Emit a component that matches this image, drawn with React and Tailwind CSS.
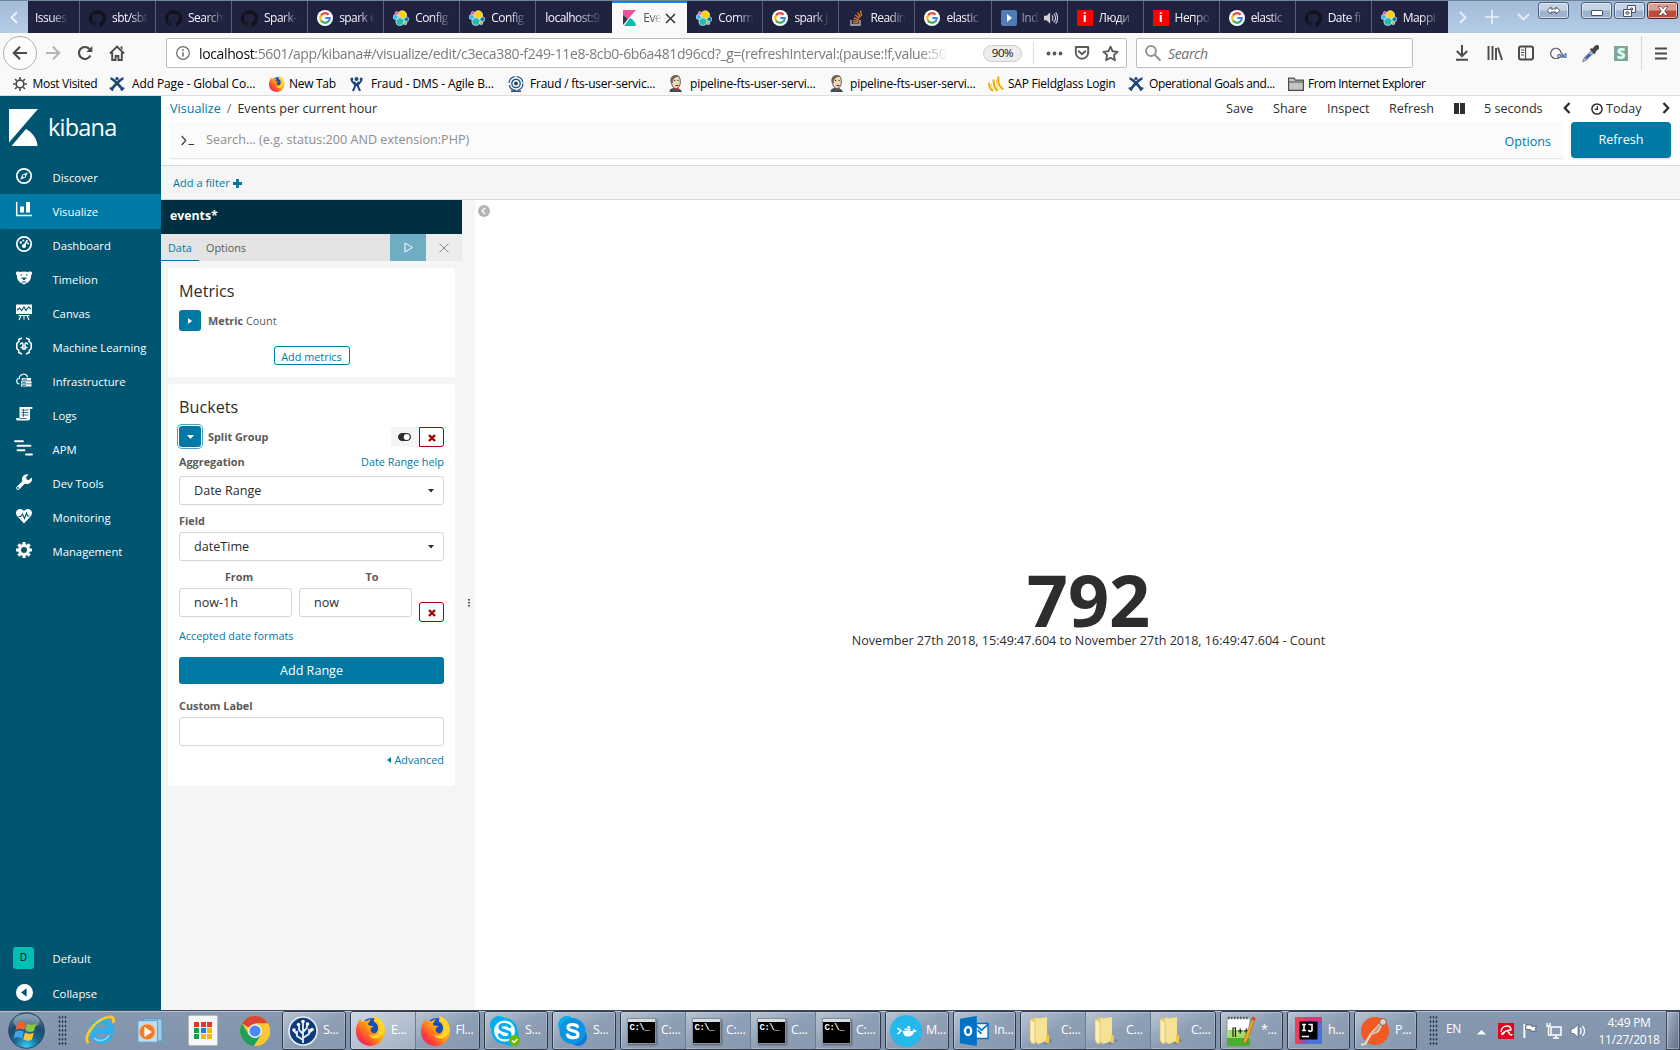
import React from "react";

const UI = "font-['Open_Sans','Noto_Sans',sans-serif]";

function Svg({ s = 16, w, h, vb = "0 0 16 16", className = "", children, ...p }) {
  return (
    <svg width={w || s} height={h || s} viewBox={vb} className={"shrink-0 " + className} fill="none" {...p}>
      {children}
    </svg>
  );
}

/* ---------- favicons ---------- */
const Github = () => (
  <Svg s={17}>
    <path fill="#121219" d="M8 0C3.6 0 0 3.6 0 8c0 3.5 2.3 6.500 5.500 7.600.4.1.5-.2.5-.4v-1.400c-2.200.5-2.700-1-2.700-1-.4-.9-.9-1.200-.9-1.200-.7-.5.1-.5.1-.5.8.1 1.200.8 1.200.8.7 1.200 1.900.9 2.300.7.1-.5.3-.9.5-1.100-1.800-.2-3.600-.9-3.600-4 0-.9.3-1.600.8-2.100-.1-.2-.4-1 .1-2.100 0 0 .7-.2 2.200.8.6-.2 1.300-.3 2-.3s1.400.1 2 .3c1.500-1 2.200-.8 2.200-.8.4 1.100.2 1.900.1 2.100.5.6.8 1.300.8 2.100 0 3.100-1.900 3.700-3.700 3.900.3.4.6.9.6 1.600v2.200c0 .2.1.5.6.4C13.700 14.500 16 11.500 16 8c0-4.400-3.600-8-8-8z" />
  </Svg>
);
const Google = () => (
  <Svg s={16}>
    <circle cx="8" cy="8" r="8" fill="#fff" />
    <g strokeWidth="2.200">
      <path stroke="#ea4335" d="M4 5.500A4.800 4.800 0 0 1 11.500 4.600" />
      <path stroke="#fbbc05" d="M4 5.500A4.800 4.800 0 0 0 4 10.500" />
      <path stroke="#34a853" d="M4 10.500A4.800 4.800 0 0 0 11.200 11.600" />
      <path stroke="#4285f4" d="M11.200 11.600A4.800 4.800 0 0 0 12.800 8H8.200" />
    </g>
  </Svg>
);
const Elastic = () => (
  <Svg s={16}>
    <circle cx="9.300" cy="5" r="4.300" fill="#fed10a" stroke="#fff" strokeWidth=".6" />
    <circle cx="6.800" cy="11.600" r="4" fill="#24bbb1" stroke="#fff" strokeWidth=".6" />
    <circle cx="2.700" cy="7" r="2.500" fill="#36b9ee" stroke="#fff" strokeWidth=".6" />
    <circle cx="13.400" cy="9.300" r="2.400" fill="#0b7bb8" stroke="#fff" strokeWidth=".6" />
    <circle cx="3.900" cy="3.200" r="1.700" fill="#ef5098" stroke="#fff" strokeWidth=".5" />
    <circle cx="12.200" cy="13" r="1.700" fill="#93c83e" stroke="#fff" strokeWidth=".5" />
  </Svg>
);
const KibanaFav = () => (
  <Svg w={13} h={16} vb="0 0 13 16">
    <path d="M0 0h13L5 9 0 5z" fill="#f04e98" />
    <path d="M0 5l5 4-5 6z" fill="#343741" />
    <path d="M7 8c4 2 6 5 6 8H1z" fill="#00bfb3" />
  </Svg>
);
const Stack = () => (
  <Svg s={16}>
    <path d="M3 10v5h9v-5" stroke="#bcbbbb" strokeWidth="1.300" />
    <path d="M5 12.800h5.500M5.100 10.600l5.400.7M5.700 8l5 1.900M7.200 5l4.300 3.300M9.500 2.500l3 4.600M12.500.5l1 5.500" stroke="#f48024" strokeWidth="1.300" />
  </Svg>
);
const PlayFav = () => (
  <Svg s={16}>
    <rect width="16" height="16" rx="2" fill="#4f7db3" />
    <path d="M6 4l5 4-5 4z" fill="#fff" />
  </Svg>
);
const RedI = () => (
  <span className="flex h-4 w-4 shrink-0 items-center justify-center bg-[#f00] text-[12px] leading-none font-bold text-white">i</span>
);
const Speaker = ({ c = "#d0d0d8" }) => (
  <Svg s={14}>
    <path d="M0 5.500h3l4-4v13l-4-4H0z" fill={c} />
    <path d="M9 5c1.500 1.500 1.500 4.500 0 6M11 3c3 2.500 3 7.500 0 10M13.300 1.500c3 3.500 3 9.500 0 13" stroke={c} strokeWidth="1.300" />
  </Svg>
);

const tabs = [
  [null, "Issues"],
  [Github, "sbt/sbt"],
  [Github, "Search"],
  [Github, "Spark-"],
  [Google, "spark e"],
  [Elastic, "Config"],
  [Elastic, "Config"],
  [null, "localhost:9"],
  [KibanaFav, "Eve"],
  [Elastic, "Comm"],
  [Google, "spark j"],
  [Stack, "Readin"],
  [Google, "elastic"],
  [PlayFav, "Ind"],
  [RedI, "Люди"],
  [RedI, "Непро"],
  [Google, "elastic"],
  [Github, "Date fi"],
  [Elastic, "Mappi"],
];

const FADE = "[mask-image:linear-gradient(to_right,black_45%,transparent)]";

function Tab({ icon: Icon, label, i }) {
  if (i === 8)
    return (
      <div className="flex h-[32px] w-[75px] shrink-0 items-center border-t-2 border-[#0a84ff] bg-[#f9f9fa] pl-[11px]">
        <KibanaFav />
        <span className={"ml-[7px] w-[19px] overflow-hidden whitespace-nowrap text-[#555] " + FADE}>{label}</span>
        <Svg s={11} vb="0 0 11 11" className="ml-[3px]">
          <path d="M1 1l9 9M10 1l-9 9" stroke="#333" strokeWidth="1.500" />
        </Svg>
      </div>
    );
  return (
    <div className={"flex h-[32px] shrink-0 items-center pt-[2px] " + (i === 0 ? "w-[52px] pl-[7px]" : "w-[76.060px] pl-[9px]") + (i === 7 || i === 18 ? "" : " border-r border-[#5d5e73]")}>
      {Icon && <Icon />}
      <span className={"h-[18px] overflow-hidden leading-[18px] whitespace-nowrap " + (i === 13 ? "w-[18px] " : Icon ? "w-[37px] " : i ? "w-[60px] " : "w-[34px] ") + (Icon ? (i === 13 ? "ml-[5px] text-[#9a9ab0] " : "ml-[6px] ") : "") + "[mask-image:linear-gradient(to_right,black_50%,transparent_97%)]"}>{label}</span>
      {i === 13 && <span className="ml-[4px]"><Speaker /></span>}
    </div>
  );
}

function WinBtn({ cls, children }) {
  return (
    <div className={"flex h-[17px] items-center justify-center rounded-[3px] border border-[#4b5f7a] shadow-[inset_0_0_0_1px_rgba(255,255,255,.55)] " + cls}>{children}</div>
  );
}
const BLUEBTN = "bg-linear-to-b from-[#c3d2e4] from-45% to-[#9db3cf] to-55%";

function TabBar() {
  return (
    <div className="flex h-[33px] border-t border-[#6d8799] bg-linear-to-b from-[#a3bbd8] to-[#b5cce7] text-[12px] tracking-[-0.550px] text-[#f4f4fa]">
      <div className="flex w-[28px] shrink-0 items-center pl-[10px]">
        <Svg w={8} h={13} vb="0 0 8 13"><path d="M7 1L1.500 6.500 7 12" stroke="#eef3f9" strokeWidth="1.800" /></Svg>
      </div>
      <div className="flex w-[1420px] shrink-0 overflow-hidden bg-[#202340]">
        {tabs.map(([icon, label], i) => <Tab key={i} icon={icon} label={label} i={i} />)}
      </div>
      <div className="flex flex-1 items-start">
        <div className="flex h-[32px] w-[90px] items-center">
          <Svg w={8} h={13} vb="0 0 8 13" className="ml-[11px]"><path d="M1 1l5.500 5.500L1 12" stroke="#e8eff8" strokeWidth="1.800" /></Svg>
          <Svg s={14} vb="0 0 14 14" className="ml-[18px]"><path d="M7 0v14M0 7h14" stroke="#e8eff8" strokeWidth="1.700" /></Svg>
          <Svg w={13} h={8} vb="0 0 13 8" className="ml-[18px]"><path d="M1 1l5.500 5.500L12 1" stroke="#e8eff8" strokeWidth="1.800" /></Svg>
        </div>
        <WinBtn cls={"mt-[1px] w-[31px] " + BLUEBTN}>
          <Svg w={15} h={9} vb="0 0 15 9"><path d="M1 4.500L5 1v2h5V1l4 3.500L10 8V6H5v2z" fill="#fff" stroke="#505868" /></Svg>
        </WinBtn>
        <WinBtn cls={"mt-[1px] ml-[12px] w-[31px] " + BLUEBTN}>
          <span className="mt-[4px] h-[6px] w-[12px] rounded-[1px] border border-[#4a5262] bg-white" />
        </WinBtn>
        <WinBtn cls={"mt-[1px] ml-[2px] w-[31px] " + BLUEBTN}>
          <Svg w={13} h={12} vb="0 0 13 12"><path d="M4.500.5h8v7h-8zM7.500 3h2v2h-2z" fill="#fff" stroke="#4a5262" /><path d="M.5 4.500h8v7h-8zM3 7h3v2H3z" fill="#fff" stroke="#4a5262" /></Svg>
        </WinBtn>
        <WinBtn cls="mt-[1px] ml-[2px] w-[31px] border-[#5b1e22] bg-linear-to-b from-[#df9d92] from-45% to-[#c04a38] to-55%">
          <Svg w={12} h={10} vb="0 0 12 10"><path d="M1 .5h3l2 2.300L8 .5h3L7.700 5 11 9.500H8L6 7.200 4 9.500H1L4.300 5z" fill="#fff" stroke="#4a4a58" strokeWidth=".8" /></Svg>
        </WinBtn>
      </div>
    </div>
  );
}

function NavBar() {
  const k = "#4a4a4f";
  return (
    <div className="flex h-[39px] items-center bg-[#f9f9fa] pt-px">
      <div className="ml-[3px] flex h-[34px] w-[34px] items-center justify-center rounded-full border border-[#b1b1b5] bg-[#fcfcfc]">
        <Svg s={16}><path d="M15 8H2M8 1.800L1.800 8 8 14.200" stroke={k} strokeWidth="2.100" /></Svg>
      </div>
      <Svg s={16} className="ml-[8px]"><path d="M1 8h13M8 1.800L14.200 8 8 14.200" stroke="#b4b4b6" strokeWidth="2.100" /></Svg>
      <Svg s={16} className="ml-[16px]"><path d="M13.400 10.500A6 6 0 1 1 12.500 4" stroke={k} strokeWidth="2.100" /><path d="M15.300 1v6h-6z" fill={k} /></Svg>
      <Svg s={16} className="ml-[16px]"><path d="M1 8.500L8 1.500l7 7M3.200 7.500V15h3.400v-4h2.800v4h3.400V7.500" stroke={k} strokeWidth="1.900" /><path d="M11.500 1.500h2v3.500l-2-2z" fill={k} /></Svg>
      <div className="ml-[41px] flex h-[30px] w-[961px] items-center rounded-[2px] border border-[#bdbdbf] bg-white">
        <Svg s={14} className="ml-[9px]"><circle cx="8" cy="8" r="7.200" stroke="#6a6a6e" strokeWidth="1.400" /><path d="M8 7v5M8 3.800v1.800" stroke="#6a6a6e" strokeWidth="1.700" /></Svg>
        <div className="ml-[9px] w-[750px] overflow-hidden text-[14px] tracking-[-0.370px] whitespace-nowrap text-[#7b7b7d] [mask-image:linear-gradient(to_right,black_96%,transparent)]">
          <span className="text-[#0c0c0d]">localhost</span>:5601/app/kibana#/visualize/edit/c3eca380-f249-11e8-8cb0-6b6a481d96cd?_g=(refreshInterval:(pause:!f,value:50
        </div>
        <div className="ml-[34px] flex h-[17px] w-[39px] items-center justify-center rounded-full border border-[#ccc] bg-[#ededed] text-[11.500px] tracking-[-0.400px] text-[#111]">90%</div>
        <div className="ml-[11px] h-[22px] w-px bg-[#ddd]" />
        <Svg w={17} h={5} vb="0 0 17 5" className="ml-[12px]"><circle cx="2.500" cy="2.500" r="1.900" fill="#5a5a5e" /><circle cx="8.500" cy="2.500" r="1.900" fill="#5a5a5e" /><circle cx="14.500" cy="2.500" r="1.900" fill="#5a5a5e" /></Svg>
        <Svg s={16} className="ml-[11px]"><path d="M1.800 2h12.400v5.500a6.200 6.200 0 0 1-12.400 0z" stroke="#5a5a5e" strokeWidth="1.900" strokeLinejoin="round" /><path d="M4.800 6.200L8 9.300l3.200-3.100" stroke="#5a5a5e" strokeWidth="1.900" strokeLinecap="round" /></Svg>
        <Svg s={17} className="ml-[12px]"><path d="M8 1.500l2 4.400 4.700.5-3.500 3.200 1 4.800L8 12l-4.200 2.400 1-4.800L1.300 6.400 6 5.900z" stroke="#5a5a5e" strokeWidth="1.700" strokeLinejoin="round" /></Svg>
      </div>
      <div className="ml-[9px] flex h-[30px] w-[277px] items-center rounded-[2px] border border-[#bdbdbf] bg-white">
        <Svg s={16} className="ml-[8px]"><circle cx="6" cy="6" r="4.900" stroke="#949496" strokeWidth="2" /><path d="M9.500 9.500l6 6" stroke="#949496" strokeWidth="2.200" /></Svg>
        <span className="ml-[7px] text-[14px] tracking-[-0.350px] text-[#6f6f71] italic">Search</span>
      </div>
      <Svg w={14} h={16} vb="0 0 14 16" className="ml-[42px]"><path d="M7 0v11M1.800 6L7 11.200 12.200 6M1 14.800h12" stroke={k} strokeWidth="2" /></Svg>
      <Svg s={16} className="ml-[18px]"><path d="M1.500 1v14M5.500 1v14M9 3v12M11 2.500L15 15" stroke={k} strokeWidth="1.900" /></Svg>
      <Svg s={16} className="ml-[15px]"><rect x="1" y="1.500" width="14" height="13" rx="2" stroke={k} strokeWidth="2" /><path d="M7.500 2v12M3 5h3M3 7.500h3M3 10h3" stroke={k} strokeWidth="1.200" /></Svg>
      <div className="ml-[16px] flex w-[18px] items-end">
        <Svg s={12}><path d="M13 13.500A7 7 0 1 1 14.900 9" stroke="#5c5c60" strokeWidth="1.600" /></Svg>
        <span className="-ml-[5px] text-[7px] leading-[7px] font-bold tracking-[-0.400px] text-[#4d4d50]">oki</span>
      </div>
      <Svg s={17} className="ml-[14px]"><path d="M9 5.500L2 12.500.8 15.500 4 14l7-7z" fill="#bcd0ee" stroke="#7c8391" /><path d="M7 8l-4 4 1 1.300 4.500-4z" fill="#355bd0" /><path d="M8 3.500l4.500 4.500M9.500 5L13 1.200c2-1 3 1 2 2L11 6.800z" stroke="#44444c" strokeWidth="1.800" fill="#44444c" /></Svg>
      <div className="ml-[15px] flex h-[15px] w-[14px] items-center justify-center bg-[#7fa59f] text-[15px] leading-none font-extrabold text-[#d9fff4]">S</div>
      <div className="ml-[13px] h-[34px] w-px bg-[#d7d7db]" />
      <Svg w={12} h={13} vb="0 0 12 13" className="ml-[13px]"><path d="M0 1.500h12M0 6.500h12M0 11.500h12" stroke={k} strokeWidth="2" /></Svg>
    </div>
  );
}

/* ---------- bookmarks ---------- */
const JiraX = () => (
  <Svg s={16}><path d="M1.500 2.500C4 2.500 11 10 14 14M14.500 2.500C12 2.500 5 10 2 14" stroke="#1d4779" strokeWidth="2.600" /><circle cx="8" cy="2.600" r="1.700" fill="#1d4779" /><path d="M.5 12.500c2-1.500 4 .5 2.800 2.300M15.500 12.500c-2-1.500-4 .5-2.800 2.300" stroke="#1d4779" strokeWidth="1.500" /></Svg>
);
const JiraMan = () => (
  <Svg w={13} h={16} vb="0 0 13 16"><circle cx="6.500" cy="3" r="2" fill="#1d4779" /><circle cx="1.800" cy="3" r="1.500" fill="#1d4779" /><circle cx="11.200" cy="3" r="1.500" fill="#1d4779" /><path d="M1.500 4c1 3 3 3 3.500 5S4 12 3 15M11.500 4c-1 3-3 3-3.500 5s1 3 2 6" stroke="#1d4779" strokeWidth="2" /><path d="M4 6l2.500 3L9 6" stroke="#1d4779" strokeWidth="2" /></Svg>
);
const Bamboo = () => (
  <Svg s={16}><circle cx="8" cy="7.500" r="6.900" stroke="#2f5a92" strokeWidth="1.300" strokeDasharray="9 2" /><circle cx="8" cy="7.500" r="4.200" stroke="#1d4779" strokeWidth="1.300" /><circle cx="8" cy="7.500" r="1.900" fill="#1d4779" /><path d="M3 15.200h10" stroke="#1d4779" strokeWidth="1.500" /></Svg>
);
const Firefox = ({ s = 16 }) => (
  <Svg s={s} vb="0 0 32 32">
    <defs>
      <linearGradient id="fx" x1="1" y1="0" x2="0" y2="1"><stop offset=".15" stopColor="#ffe226" /><stop offset=".5" stopColor="#ff9514" /><stop offset=".75" stopColor="#ff3b3a" /><stop offset="1" stopColor="#e31587" /></linearGradient>
    </defs>
    <circle cx="17" cy="14" r="12" fill="#1c54c8" />
    <path d="M2.500 7C3 5 4 4 4.500 3.200c.3 1.300.8 2.300 1.500 2.800 2-1 4-.8 5-.3L16 3c-2 2-2.500 4-1 5.500 2 .5 4 .5 4 1.500 0 1.500-3 2-3.500 4-.5 3 4 4 6.500 1.500 1-5-2-7-3-9l1-6c5 1 10 6 11 14C31 25 24 32 16 32 7 32 0 26 0 16.500 0 12 1 9 2.500 7z" fill="url(#fx)" />
    <path d="M12.500 8.500C15 5 20 5 22.500 9c2 3.500 1 7-1.500 9-3 1-5-.5-5-2.500 0-2 3-2.500 3-4.500-2-.5-5 0-6.500-2.500z" fill="#1b4bb4" />
    <path d="M20 0c0 5 6 7 5 14-1 6-7 8-11 6 2 5 11 6 15-2 3-7-2-15-9-18z" fill="#ffd52a" />
  </Svg>
);
const Jenkins = () => (
  <Svg w={15} h={17} vb="0 0 15 17"><path d="M1.500 17c0-3 2-4 5.500-4s6 1 7 4z" fill="#335061" /><path d="M3.200 6C3 2 5 .6 7.800.6S12.500 2.500 12.300 7c0 4-2 6.500-4.500 6.500S3.500 10 3.200 6z" fill="#f0d6b7" stroke="#55483c" strokeWidth=".9" /><path d="M2.800 8C1.500 3 4 .3 8 .3c2 0 3.500.7 4 2C9 1.500 5 2 4.800 8z" fill="#6f665e" /><path d="M6 5.500h1.200M9.500 5.500h1.200M7.500 10.500h3" stroke="#333" /><path d="M6 12.800l5 2.700v-2.700l-5 2.700z" fill="#d33833" /></Svg>
);
const Sap = () => (
  <Svg s={16}><path d="M1 7c0 4 1.500 6.500 4 8M5.500 3.500c0 5 1 8.500 4 11.500M10.500.5c-1 6 0 10 5 13" stroke="#f0ab00" strokeWidth="2" /><path d="M3.500 8c0 3 1 5 2 6.500M8.500 4c0 5 1 7.500 2.500 10" stroke="#f7cf6a" strokeWidth="1" /></Svg>
);
const Folder = () => (
  <Svg w={16} h={14} vb="0 0 16 14"><path d="M.6 13.400V1.200h5.500l1.300 1.900h8v10.300z" fill="#c4c4c4" stroke="#4c4c4e" strokeWidth="1.200" /><path d="M1 5h14.500" stroke="#4c4c4e" /></Svg>
);
const GearSm = () => (
  <Svg s={14}><circle cx="8" cy="8" r="4.400" stroke="#4d4d50" strokeWidth="2" /><path d="M8 0v3M8 13v3M0 8h3M13 8h3M2.300 2.300l2 2M11.700 11.700l2 2M2.300 13.700l2-2M11.700 4.300l2-2" stroke="#4d4d50" strokeWidth="1.900" /></Svg>
);

const marks = [
  [GearSm, "Most Visited", "w-[96px]", "w-[19.500px]", "tracking-[-0.310px]"],
  [JiraX, "Add Page - Global Co...", "w-[160px]", "w-[23px]", "tracking-[-0.120px]"],
  [Firefox, "New Tab", "w-[81px]", "w-[20px]", "tracking-[-0.300px]"],
  [JiraMan, "Fraud - DMS - Agile B...", "w-[158px]", "w-[21px]", "tracking-[-0.130px]"],
  [Bamboo, "Fraud / fts-user-servic...", "w-[160px]", "w-[22px]", "tracking-[-0.230px]"],
  [Jenkins, "pipeline-fts-user-servi...", "w-[161px]", "w-[22px]", "tracking-[-0.210px]"],
  [Jenkins, "pipeline-fts-user-servi...", "w-[159px]", "w-[21px]", "tracking-[-0.210px]"],
  [Sap, "SAP Fieldglass Login", "w-[140px]", "w-[20px]", "tracking-[-0.230px]"],
  [JiraX, "Operational Goals and...", "w-[160px]", "w-[21px]", "tracking-[-0.380px]"],
  [Folder, "From Internet Explorer", "w-[150px]", "w-[20px]", "tracking-[-0.470px]"],
];

function Bookmarks() {
  return (
    <div className="flex h-[24px] items-center border-b border-[#dcdcde] bg-[#f9f9fa] pl-[13px] text-[12px] text-black">
      {marks.map(([Icon, label, w, iw, tr], i) => (
        <div key={i} className={"flex shrink-0 items-center whitespace-nowrap " + w}>
          <span className={"shrink-0 " + iw}><Icon /></span>
          <span className={tr}>{label}</span>
        </div>
      ))}
    </div>
  );
}

/* ---------- kibana side navigation ---------- */
const W = "#fff";
const navIcons = {
  Discover: <><circle cx="8" cy="8" r="7.200" stroke={W} strokeWidth="1.700" /><path d="M11.800 4.200L9.500 9.500 4.200 11.800 6.500 6.500z" fill={W} /><circle cx="8" cy="8" r="1.200" fill="#005571" /></>,
  Visualize: <><path d="M.7 0v13.500H16" stroke={W} strokeWidth="1.500" /><path d="M4 4.500h4V10.500H4zM10 0h4v10.500h-4z" fill={W} /></>,
  Dashboard: <><circle cx="8" cy="8" r="7.200" stroke={W} strokeWidth="1.700" /><path d="M11.300 4.300L8.500 9" stroke={W} strokeWidth="1.800" /><circle cx="8" cy="10" r="2.100" fill={W} /><circle cx="7.300" cy="4.500" r="1.100" fill={W} /><circle cx="4.800" cy="6.500" r="1.200" fill={W} /><circle cx="12" cy="7.500" r="1" fill={W} /></>,
  Timelion: <><path d="M0 2.500C1 1 3 1.300 4 2c2.500-.8 5.500-.8 8 0 1-.7 3-1 4 .5.3 1.500-.5 2.500-1 3 .3 3-1 5-2.500 6.500L8 14.500 3.500 12C2 10.500.7 8.500 1 5.500c-.5-.5-1.300-1.500-1-3z" fill={W} /><path d="M4.500 5h1.800M9.700 5h1.800M6.500 8h3L8 9.700zM6 12h4" stroke="#005571" strokeWidth="1.200" fill="#005571" /></>,
  Canvas: <><path d="M0 .5h16V10H0z" fill={W} /><path d="M1 6l2.500-2 2 2.500L8 3l2 3.500L12.500 3 15 5" stroke="#005571" strokeWidth="1.100" /><path d="M5 11.500l-2 4.500M11 11.500l2 4.500M8 11v4.500M2.500 11.500h11" stroke={W} strokeWidth="1.100" /></>,
  "Machine Learning": <><path d="M6 0L2.800 1.500v2L.8 5.500v5l2 2v2L6 16M10 0l3.200 1.500v2l2 2v5l-2 2v2L10 16" stroke={W} strokeWidth="1.600" /><path d="M4.300 6.500C4.500 4.500 7 4.500 7 6.500V12M4.500 9.500H7M11.700 6.500C11.500 4.500 9 4.500 9 6.500V12M9 9.500h2.500" stroke={W} strokeWidth="1.500" /></>,
  Infrastructure: <><path d="M3.500 12C-.3 12 0 6.500 3.300 6.500 3.300 1.500 11 .5 11.500 5.500" stroke={W} strokeWidth="1.200" /><path d="M6 6h9v2.500H5.500zM5 9.200h10.500v2.300H5zM5 12.200h10.500v2.300H5z" fill={W} /><path d="M6 10.400h4M6 13.400h4M7 7.200h4" stroke="#005571" strokeWidth=".8" /></>,
  Logs: <><path d="M3.500 1H15a1 1 0 0 1 1 2h-2v9a2 2 0 0 1-2 2.500H1C0 14 0 12 .5 12h3z" fill={W} /><path d="M5.500 4h7M5.500 6.500h7M5.500 9h7M7.500 3v8M3.500 12.500h7" stroke="#005571" strokeWidth=".8" /></>,
  APM: <><path d="M-1 1.200h8M1.500 5.800h13M1.500 10.300h7M10 14.500h6" stroke={W} strokeWidth="1.900" strokeLinecap="round" /></>,
  "Dev Tools": <><path d="M2 14L8 8" stroke={W} strokeWidth="3.600" strokeLinecap="round" /><path d="M15.700 3.500a5 5 0 0 1-7 6L6.500 7.500a5 5 0 0 1 6-7L10 3.200l.6 2.200 2.200.6z" fill={W} /><circle cx="2" cy="14" r=".9" fill="#005571" /></>,
  Monitoring: <><path d="M8 15.500L1.500 8.500C-1.500 5 .5 1 4 1c2 0 3.300 1 4 2.200C8.700 2 10 1 12 1c3.500 0 5.500 4 2.500 7.500z" fill={W} /><path d="M2.500 8.500h2.200L6.500 6l2 4.500L10.500 5l1 3h2" stroke="#005571" strokeWidth="1.100" /></>,
  Management: <><circle cx="8" cy="8" r="4.500" stroke={W} strokeWidth="3" /><path d="M8 0v3M8 13v3M0 8h3M13 8h3M2.400 2.400l2 2M11.600 11.600l2 2M2.400 13.600l2-2M11.600 4.400l2-2" stroke={W} strokeWidth="3.200" /></>,
};

function SideNav() {
  return (
    <nav className="flex w-[161px] shrink-0 flex-col bg-[#005571] text-[11.300px] text-white">
      <div className="flex h-[64px] items-start">
        <Svg w={29} h={37} vb="0 0 29 37" className="mt-[13px] ml-[9px]"><path d="M0 0h29L0 33.500z" fill="#fff" /><path d="M17 20c7 4 11 10 11.500 17H2.500z" fill="#fff" /></Svg>
        <span className="mt-[15px] ml-[10px] text-[23.500px] leading-[32px] font-medium tracking-[-0.800px]">kibana</span>
      </div>
      {Object.keys(navIcons).map((n) => (
        <div key={n} className={"flex h-[34px] items-center " + (n === "Visualize" ? "bg-[#0079a5] shadow-[0_2px_0_-1px_#0079a5]" : "")}>
          <Svg s={16} className="mb-[2px] ml-[16px] overflow-visible">{navIcons[n]}</Svg>
          <span className="mt-[2px] ml-[20.500px] whitespace-nowrap">{n}</span>
        </div>
      ))}
      <div className="mt-auto flex h-[36px] items-center">
        <span className="mb-[2px] ml-[13px] flex h-[22px] w-[21px] items-center justify-center rounded-[3px] bg-[#00bfb3] pb-[1px] text-[10px] text-black">D</span>
        <span className="ml-[18.500px]">Default</span>
      </div>
      <div className="flex h-[33px] items-center">
        <Svg s={17} className="mb-[2px] ml-[16px]"><circle cx="8" cy="8" r="8" fill="#fff" /><path d="M10 4v8L4.800 8z" fill="#005571" /></Svg>
        <span className="mt-[2px] ml-[19.500px]">Collapse</span>
      </div>
    </nav>
  );
}

const PlusBold = () => <Svg s={9} vb="0 0 9 9" className="ml-[3px]"><path d="M4.500 0v9M0 4.500h9" stroke="#0079a5" strokeWidth="2.800" /></Svg>;

function TopNav() {
  return (
    <div className="h-[70px] border-b border-[#d9d9d9] bg-white text-[12.600px] text-[#2d2d2d]">
      <div className="flex h-[26px] items-center pl-[9px] whitespace-nowrap">
        <span className="text-[#0079a5]">Visualize</span>
        <span className="ml-[6px] text-[#666]">/</span>
        <span className="ml-[6px]">Events per current hour</span>
        <div className="ml-auto flex items-center">
          <span className="w-[47px]">Save</span>
          <span className="w-[54px]">Share</span>
          <span className="w-[62px]">Inspect</span>
          <span className="w-[65px]">Refresh</span>
          <span className="flex w-[30px] gap-[1px]"><i className="h-[11px] w-[5px] bg-[#2d2d2d]" /><i className="h-[11px] w-[5px] bg-[#2d2d2d]" /></span>
          <span className="w-[79px]">5 seconds</span>
          <Svg w={8} h={12} vb="0 0 8 12" className="mb-[1px]"><path d="M6.500 1L1.800 6l4.700 5" stroke="#2d2d2d" strokeWidth="2.300" /></Svg>
          <Svg s={12} className="ml-[20px]"><circle cx="8" cy="8" r="6.800" stroke="#2d2d2d" strokeWidth="2" /><path d="M8.500 4v4.500H5" stroke="#2d2d2d" strokeWidth="1.700" /></Svg>
          <span className="ml-[3px] w-[56px]">Today</span>
          <Svg w={8} h={12} vb="0 0 8 12" className="mr-[10px] mb-[1px]"><path d="M1.500 1l4.700 5-4.700 5" stroke="#2d2d2d" strokeWidth="2.300" /></Svg>
        </div>
      </div>
      <div className="flex h-[36px] pr-[9px] pl-[9px]">
        <div className="flex flex-1 items-center bg-[#fbfbfb] shadow-[0_1px_1px_rgba(0,0,0,.1)]">
          <Svg w={14} h={11} vb="0 0 14 11" className="ml-[11px]"><path d="M.7 1l4 4.500-4 4.500M7.500 9.500H13" stroke="#3a3a3a" strokeWidth="1.200" /></Svg>
          <span className="ml-[11px] text-[#8e8e8e]">Search... (e.g. status:200 AND extension:PHP)</span>
          <span className="mt-[4px] mr-[12px] ml-auto text-[#0079a5]">Options</span>
        </div>
        <div className="ml-[8px] flex w-[100px] items-center justify-center rounded-[4px] bg-[#0079a5] text-white shadow-[0_1px_2px_rgba(0,0,0,.15)]"><span>Refresh</span></div>
      </div>
    </div>
  );
}

const Caret = () => <Svg w={6} h={4} vb="0 0 6 4"><path d="M0 0h6L3 3.500z" fill="#2d2d2d" /></Svg>;
const RedX = ({ cls }) => (
  <div className={"flex h-[20px] w-[25px] items-center justify-center border border-[#a30000] bg-white pt-[2px] " + cls}>
    <Svg s={8} vb="0 0 8 8"><path d="M1 1l6 6M7 1L1 7" stroke="#a30000" strokeWidth="2.400" /></Svg>
  </div>
);
const Select = ({ children }) => (
  <div className="flex h-[29px] items-center justify-between rounded-[3px] border border-[#d4d4d4] pr-[9px] pl-[14px] text-[12.600px] text-[#2d2d2d]"><span className="pt-[2px]">{children}</span><Caret /></div>
);

function Editor() {
  return (
    <div className="w-[301px] shrink-0 text-[10.850px] text-[#5a5a5a]">
      <div className="flex h-[34px] items-center bg-[#002f42] pb-[1px] pl-[9px] text-[12.300px] font-bold text-white">events*</div>
      <div className="flex h-[27px] bg-[#e4e4e4]">
        <div className="flex w-[38px] items-center border-b border-[#0079a5] pt-[2px] pl-[7px] text-[#0079a5]">Data</div>
        <span className="mt-[6px] ml-[7px]">Options</span>
        <div className="ml-auto flex w-[36px] items-center justify-center bg-[#6fadc4]"><Svg w={10} h={11} vb="0 0 10 11" className="ml-[1px]"><path d="M1 1l7.500 4.500L1 10z" stroke="#fff" strokeWidth="1" /></Svg></div>
        <div className="flex w-[36px] items-center justify-center bg-[#ececec]"><Svg s={10} vb="0 0 10 10"><path d="M.5.5l9 9M9.500.5l-9 9" stroke="#8a8a8a" strokeWidth="1" /></Svg></div>
      </div>

      <section className="mt-[7px] ml-[7px] h-[109px] w-[287px] rounded-[4px] bg-white px-[11px] pt-[10px]">
        <h2 className="h-[26px] text-[16.200px] leading-[26px] text-[#2d2d2d]">Metrics</h2>
        <div className="mt-[6px] flex h-[21px] items-center">
          <span className="flex h-[21px] w-[22px] items-center justify-center rounded-[3px] bg-[#0079a5]"><Svg w={4} h={6} vb="0 0 4 6"><path d="M0 0l4 3-4 3z" fill="#fff" /></Svg></span>
          <span className="mt-[1px] ml-[7px]"><b>Metric</b> Count</span>
        </div>
        <div className="mt-[15px] flex justify-center"><span className="flex h-[19px] w-[76px] items-center justify-center rounded-[3px] border border-[#0079a5] pt-[3px] whitespace-nowrap text-[#0079a5]">Add metrics</span></div>
      </section>

      <section className="mt-[7px] ml-[7px] h-[402px] w-[287px] rounded-[4px] bg-white px-[11px] pt-[10px]">
        <h2 className="h-[26px] text-[16.200px] leading-[26px] text-[#2d2d2d]">Buckets</h2>
        <div className="mt-[6px] flex h-[21px] items-center">
          <span className="flex h-[21px] w-[22px] items-center justify-center rounded-[3px] bg-[#0079a5] shadow-[0_0_0_1px_#fff,0_0_0_2px_#4da1c0]"><Svg w={7} h={4} vb="0 0 7 4"><path d="M0 0h7L3.500 4z" fill="#fff" /></Svg></span>
          <b className="mt-[1px] ml-[7px]">Split Group</b>
          <span className="ml-auto flex h-[20px] w-[28px] items-center justify-center rounded-l-[3px] bg-[#f5f5f5]"><Svg w={13} h={8} vb="0 0 13 8" className="mr-[1px]"><rect x=".5" y=".5" width="12" height="7" rx="3.500" fill="#2d2d2d" stroke="#2d2d2d" /><circle cx="8.700" cy="4" r="3" fill="#fff" /></Svg></span>
          <RedX cls="rounded-r-[3px]" />
        </div>
        <div className="mt-[7px] flex h-[16px] items-center justify-between"><b>Aggregation</b><span className="text-[#0079a5]">Date Range help</span></div>
        <div className="mt-[6px]"><Select>Date Range</Select></div>
        <div className="mt-[8px] flex h-[16px] items-center"><b>Field</b></div>
        <div className="mt-[3px]"><Select>dateTime</Select></div>
        <div className="mt-[8px] flex">
          {[["From", "now-1h", "pl-[7px]"], ["To", "now", "pl-[33px]"]].map(([l, v, p]) => (
            <div key={l} className="mr-[7px] w-[113px]">
              <div className={"flex h-[16px] items-center justify-center font-bold " + p}>{l}</div>
              <div className="mt-[3px] flex h-[29px] items-center rounded-[3px] border border-[#d4d4d4] pt-[2px] pl-[14px] text-[12.600px] text-[#2d2d2d]">{v}</div>
            </div>
          ))}
          <RedX cls="mt-[33px] rounded-[3px]" />
        </div>
        <div className="mt-[6px] flex h-[16px] items-center text-[#0079a5]">Accepted date formats</div>
        <div className="mt-[13px] flex h-[27px] items-center justify-center rounded-[3px] bg-[#0079a5] pt-[1px] text-[12.600px] text-white">Add Range</div>
        <div className="mt-[14px] flex h-[16px] items-center"><b>Custom Label</b></div>
        <div className="mt-[3px] h-[29px] rounded-[3px] border border-[#d4d4d4]" />
        <div className="mt-[6px] flex h-[16px] items-center justify-end text-[#0079a5]"><Svg w={4} h={6} vb="0 0 4 6" className="mr-[3px]"><path d="M4 0v6L0 3z" fill="#0079a5" /></Svg>Advanced</div>
      </section>
    </div>
  );
}

/* ---------- task bar ---------- */
const Cmd = () => (
  <div className="h-[26px] w-[29px] border border-[#8a8f96] bg-black shadow-[1px_1px_2px_rgba(0,0,0,.4)]">
    <div className="h-[3px] bg-[#d5dbe2]" />
    <div className="pt-[1px] pl-[2px] font-['Liberation_Mono',monospace] text-[9px] leading-[10px] font-bold tracking-[-0.500px] text-white">C:\_</div>
  </div>
);
const Fold = () => (
  <Svg s={30} vb="0 0 30 30"><path d="M16 26l9-3 2 2-8 4z" fill="#6d7787" opacity=".5" /><path d="M4 3l8-2v24l-6 3-2-3z" fill="#e9cf74" /><path d="M9 3l12-2v24l-9 3-3-3z" fill="#f5e294" /><path d="M4 3l5 3v22l-3-1-2-3z" fill="#fbeeb1" stroke="#d4b65a" strokeWidth=".6" /><path d="M20 19h3v8h-3z" fill="#f0c64c" /></Svg>
);
const SkypeIcon = ({ ok }) => (
  <Svg s={30} vb="0 0 30 30"><circle cx="9" cy="9" r="9" fill="#00aff0" /><circle cx="20" cy="21" r="9" fill={ok ? "#00aff0" : "#0b78d4"} /><circle cx="14.500" cy="15" r="13" fill={ok ? "#00aff0" : "#0a94e4"} />{ok && <circle cx="14.500" cy="15" r="10.500" fill="#fff" />}
    <path d="M19.500 10.500C18 8 10 7.500 10 11.500c0 4.500 10 2 10 7 0 4.500-9 4-10.500.5" stroke={ok ? "#00aff0" : "#fff"} strokeWidth="3.200" strokeLinecap="round" />
    {ok && <><circle cx="24.500" cy="24.500" r="5.500" fill="#6bb700" /><path d="M22 24.500l2 2 3.500-3.500" stroke="#fff" strokeWidth="1.300" /></>}</Svg>
);
const taskIcons = {
  tree: <Svg s={30} vb="0 0 30 30"><circle cx="15" cy="15" r="14" fill="#0d3a78" stroke="#e8eef6" strokeWidth="1.600" /><path d="M15 27V6M15 24l-6-4v-5M15 22l6-4v-5M15 18l-4-4v-4M15 16l4-4V9M9 18l-3-3M21 17l3-3" stroke="#e8eef6" strokeWidth="1.800" /><circle cx="15" cy="5.500" r="1.800" fill="#fff" /><circle cx="10.500" cy="8.500" r="1.800" fill="#fff" /><circle cx="19.500" cy="8" r="1.800" fill="#fff" /><circle cx="6" cy="14" r="1.800" fill="#fff" /><circle cx="24" cy="13.500" r="1.800" fill="#fff" /></Svg>,
  ff: <Firefox s={30} />,
  sk1: <SkypeIcon ok />,
  sk2: <SkypeIcon />,
  cmd: <Cmd />,
  dock: <Svg s={32} vb="0 0 32 32"><circle cx="16" cy="16" r="16" fill="#24b8eb" /><path d="M7.500 13l3.500 3-3.500 3" stroke="#fff" strokeWidth="1.600" /><path d="M13 16h10c0-1 .5-2 1-2.500.5.500.8 1.300.8 1.800 1 0 1.500 0 2 .3-.5 1.200-1.500 1.700-2.800 1.700-1 3-3 4.200-6 4.200-3.500 0-5-2-5-5.500zM14.500 13.500h6v2h-6zM17.500 11h2.500v2h-2.500z" fill="#fff" /></Svg>,
  outlook: <Svg s={30} vb="0 0 30 32"><path d="M16 8h14v16H16z" fill="#fff" stroke="#0072c6" strokeWidth="1.500" /><path d="M16 9l7 6 7-6M19 15l4 4" stroke="#0072c6" strokeWidth="1.800" /><path d="M0 3l18-3v32L0 29z" fill="#0072c6" /><ellipse cx="8.700" cy="16" rx="3.300" ry="4.300" stroke="#fff" strokeWidth="2.500" /></Svg>,
  fold: <Fold />,
  npp: <Svg w={30} h={32} vb="0 0 30 32"><path d="M1 3h23v28H1z" fill="#fff" stroke="#8c9a8a" /><path d="M1 15h23v16H1z" fill="#a6dc6a" /><path d="M1 23h23v8H1z" fill="#48b02c" /><path d="M2 3h21" stroke="#555" strokeDasharray="1.500 1.500" strokeWidth="2.500" /><path d="M7 22v-9h2.500v9M12 16h4.500M14.250 13.500v5M18 16h4.500M20.250 13.500v5" stroke="#222" strokeWidth="1.200" /><path d="M27 2L18 24l-1 5 4-3 8-22z" fill="#f0a92e" stroke="#9b6a1a" strokeWidth=".7" /><path d="M26.500 1.500l3 1.300-1 3-3-1.300z" fill="#d0433b" /></Svg>,
  ij: <Svg s={27} vb="0 0 27 27"><path d="M0 0h27v27H0z" fill="#8a4fb8" /><path d="M0 0h27v4H0z" fill="#d8377a" /><path d="M0 0h10L5 27H0z" fill="#ee3f58" /><path d="M27 5v22H10z" fill="#4a72dc" /><path d="M4.500 4.500h18v18h-18z" fill="#000" /><path d="M7 7.500h4M9 7.500v6M7 13.500h4M13.500 7.500H17v4.500a1.500 1.500 0 0 1-3.500 1M7 19.500h7" stroke="#fff" strokeWidth="1.600" /></Svg>,
  post: <Svg s={30} vb="0 0 30 30"><circle cx="15" cy="15" r="14" fill="#f15a24" /><path d="M22 6L11 18l-6 10-4 1M11 18l7-3 4-8" stroke="#e4d3c4" strokeWidth="2.400" /><path d="M22 6L11 18l7-3z" fill="#c9a083" /><circle cx="23" cy="6" r="3.500" fill="#ddd0c4" stroke="#7c5a48" /></Svg>,
};
const tasks = [
  ["w-[64px]", [["tree", "S..."]]],
  ["w-[130px]", [["ff", "E...", 1], ["ff", "Fl..."]]],
  ["w-[64px]", [["sk1", "S..."]]],
  ["w-[64px]", [["sk2", "S..."]]],
  ["w-[261px]", [["cmd", "C:..."], ["cmd", "C:..."], ["cmd", "C..."], ["cmd", "C:..."]]],
  ["w-[64px]", [["dock", "M..."]]],
  ["w-[63px]", [["outlook", "In..."]]],
  ["w-[196px]", [["fold", "C:..."], ["fold", "C..."], ["fold", "C:..."]]],
  ["w-[63px]", [["npp", "*..."]]],
  ["w-[63px]", [["ij", "h..."]]],
  ["w-[63px]", [["post", "P..."]]],
];
const Grip = ({ cls }) => <span className={"h-[31px] w-[9px] bg-[radial-gradient(circle,#2f3a4a_0.900px,transparent_1.100px)] bg-[length:3px_4.400px] " + cls} />;

function TaskBar() {
  return (
    <div className="flex h-[40px] items-center border-t border-[#3f4b5d] bg-linear-to-b from-[#8798b0] to-[#8294ad] text-[13px] text-white shadow-[inset_0_1px_0_#b6c2d2]">
      <Svg s={37} vb="0 0 37 37" className="ml-[8px]">
        <defs><radialGradient id="orb" cx=".5" cy=".95" r=".9"><stop offset="0" stopColor="#2fd0f8" /><stop offset=".4" stopColor="#1a6590" /><stop offset=".7" stopColor="#1c4a6c" /><stop offset="1" stopColor="#5a7d93" /></radialGradient></defs>
        <circle cx="18.500" cy="18.500" r="17.800" fill="url(#orb)" stroke="#234a6b" /><ellipse cx="18.500" cy="9.500" rx="13" ry="7.500" fill="#fff" opacity=".3" />
        <path d="M9 11.500c3-2.500 6-2 8.500-.3L16 18c-3-1.700-5.500-1.500-8.500.3z" fill="#f0622a" /><path d="M19 11.800c3 1.700 6 1.500 9-.5L26 19c-3 1.500-6 1.200-8.700-.4z" fill="#8dc63f" /><path d="M7.200 19.800c3-1.700 6-1.700 8.500 0L14 26.500c-2.700-1.700-5.500-1.500-8.300 0z" fill="#3fa4e8" /><path d="M17 20.500c3 1.600 5.800 1.700 8.700.2L24 27.500c-3 1.700-6 1.500-8.700-.2z" fill="#fdc52e" />
      </Svg>
      <Grip cls="ml-[13px]" />
      <Svg s={31} vb="0 0 31 31" className="ml-[18px]"><path d="M25.500 20.500A9.800 9.800 0 1 1 26.500 16H9" stroke="#2db0ec" strokeWidth="5.600" /><path d="M24 20A9.500 9.500 0 0 1 9 23" stroke="#8fdcfb" strokeWidth="1.500" /><path d="M3.500 28C-2 23 8 7 20 3c7-2.500 10-.5 8 5" stroke="#f7c92f" strokeWidth="2.800" /></Svg>
      <Svg s={27} vb="0 0 29 29" className="ml-[21px]"><path d="M7 2h20v24H7z" fill="#9ccbe8" stroke="#4e92be" /><path d="M1 4h21v23H1z" fill="#b9dff4" stroke="#5d9fc8" /><circle cx="11" cy="16" r="8.500" fill="#f47b20" stroke="#fbc08a" /><path d="M8 10.500v11l8-5.500z" fill="#fff" /></Svg>
      <div className="ml-[24px] grid h-[31px] w-[30px] grid-cols-[5px_5px_5px] place-content-center gap-[1.500px] rounded-[2px] border border-[#b9b9b9] bg-[#f6f6f6]">
        {["bg-[#ee3124]", "bg-[#ee3124]", "bg-[#ee3124]", "bg-[#10a04b]", "bg-[#1a7fe0]", "bg-[#f9b500]", "bg-[#10a04b]", "bg-[#f9b500]", "bg-[#f9b500]"].map((c, i) => <i key={i} className={"h-[4.500px] w-[5px] " + c} />)}
      </div>
      <Svg s={30} vb="0 0 30 30" className="ml-[22px]"><circle cx="15" cy="15" r="15" fill="#fbc732" /><path d="M15 15L2 7.500A15 15 0 0 1 28 7.500H15z" fill="#dc4437" /><path d="M2 7.500A15 15 0 0 0 14 30l7.500-11.500L9 19z" fill="#1fa15d" /><path d="M14 30A15 15 0 0 0 28 7.500H15l6.500 11z" fill="#fbc732" /><circle cx="15" cy="15" r="7" fill="#f1f1f1" /><circle cx="15" cy="15" r="5.500" fill="#4a8af4" /></Svg>
      <div className="ml-[12px] flex h-[39px] gap-[4px]">
        {tasks.map(([w, items], i) => (
          <div key={i} className={"flex shrink-0 overflow-hidden rounded-[3px] border border-[#2f3948] shadow-[inset_0_0_0_1px_rgba(255,255,255,.55)] " + w}>
            {items.map(([ic, l, on], j) => (
              <div key={j} className={"flex min-w-0 flex-1 items-center pl-[5px] " + (j ? "border-l border-[#6d7c92] " : "") + (on ? "bg-linear-to-br from-[#dfe5ec]/80 to-[#a9b7c9]/80" : "bg-linear-to-br from-[#c5cfdb]/80 via-[#98a8bc]/50 to-[#8799b0]")}>
                <span className="flex w-[30px] shrink-0 items-center justify-center">{taskIcons[ic]}</span>
                <span className="ml-[5px] text-[12.500px] tracking-[-0.300px] whitespace-nowrap">{l}</span>
              </div>
            ))}
          </div>
        ))}
      </div>
      <Grip cls="ml-[12px]" />
      <span className="mb-[4px] ml-[8px] text-[12px] tracking-[-0.300px]">EN</span>
      <Svg w={9} h={5} vb="0 0 9 5" className="mt-[3px] ml-[16px]"><path d="M4.500 0L9 4.500H0z" fill="#fff" /></Svg>
      <Svg s={16} className="ml-[12px]"><path d="M0 0h16v16H0z" fill="#e2001a" /><path d="M3 9c0-4 3-6 6-6s4 2 4 4L8 8l-5 3M9 7l3 4.500c1 1 2 .5 2-.5M4 12l3-3" stroke="#fff" strokeWidth="1.400" /></Svg>
      <Svg s={15} className="ml-[8px]"><path d="M2.500 1v15" stroke="#fff" strokeWidth="2" /><path d="M4 2h6v1.500h5.500L14 6l1.500 2.500H9V7H4z" fill="#fff" stroke="#444f5e" strokeWidth=".8" /></Svg>
      <Svg s={16} className="ml-[9px]"><path d="M5 4h10v8H5zM7 15h6M10 12v3" fill="#8a9cb5" stroke="#fff" strokeWidth="1.500" /><path d="M1 0v3h3V0M2.500 3v9h3" stroke="#fff" strokeWidth="1.400" /></Svg>
      <Svg s={16} className="ml-[8px]"><path d="M1 5.500h3l4-4v13l-4-4H1z" fill="#fff" stroke="#4a5566" strokeWidth=".7" /><path d="M10 5c1.500 1.500 1.500 4.500 0 6M12.500 3c2.500 3 2.500 7 0 10" stroke="#fff" strokeWidth="1.200" /></Svg>
      <div className="ml-[10px] w-[66px] text-center text-[12px] leading-[17px] tracking-[-0.250px] whitespace-nowrap">4:49 PM<br />11/27/2018</div>
      <div className="ml-auto h-[39px] w-[14px] border border-[#3f4b5d] bg-linear-to-br from-[#a9b6c7] to-[#5d6d84] shadow-[inset_0_0_0_1px_rgba(255,255,255,.3)]" />
    </div>
  );
}

export default function App() {
  return (
    <div className={"flex h-[1050px] w-[1680px] flex-col overflow-hidden bg-white " + UI}>
      <TabBar />
      <NavBar />
      <Bookmarks />
      <div className="flex h-[914px]">
        <SideNav />
        <main className="flex min-w-0 flex-1 flex-col bg-[#f5f5f5]">
          <TopNav />
          <div className="flex h-[34px] items-center border-b border-[#d9d9d9] pt-[1px] pl-[12px] text-[11px] text-[#0079a5]"><span className="tracking-[0.050px]">Add a filter</span><PlusBold /></div>
          <div className="flex flex-1">
            <Editor />
            <div className="flex w-[13px] shrink-0 justify-center pt-[399px]"><Svg w={2} h={8} vb="0 0 2 8"><path d="M0 0h2v1.500H0zM0 3h2v1.500H0zM0 6h2v1.500H0z" fill="#555" /></Svg></div>
            <div className="flex flex-1 flex-col bg-white pl-[3px]">
              <Svg s={12} className="mt-[5px]"><circle cx="8" cy="8" r="8" fill="#b5b5b5" /><path d="M9.500 4L5.500 8l4 4" stroke="#fff" strokeWidth="2" /></Svg>
              <div className="mt-[349px] flex flex-col items-center pl-[19px] text-[#2d2d2d]">
                <div className="h-[66px] text-[72px] leading-[66px] font-bold">792</div>
                <div className="text-[12.550px] leading-[18px]">November 27th 2018, 15:49:47.604 to November 27th 2018, 16:49:47.604 - Count</div>
              </div>
            </div>
          </div>
        </main>
      </div>
      <TaskBar />
    </div>
  );
}
